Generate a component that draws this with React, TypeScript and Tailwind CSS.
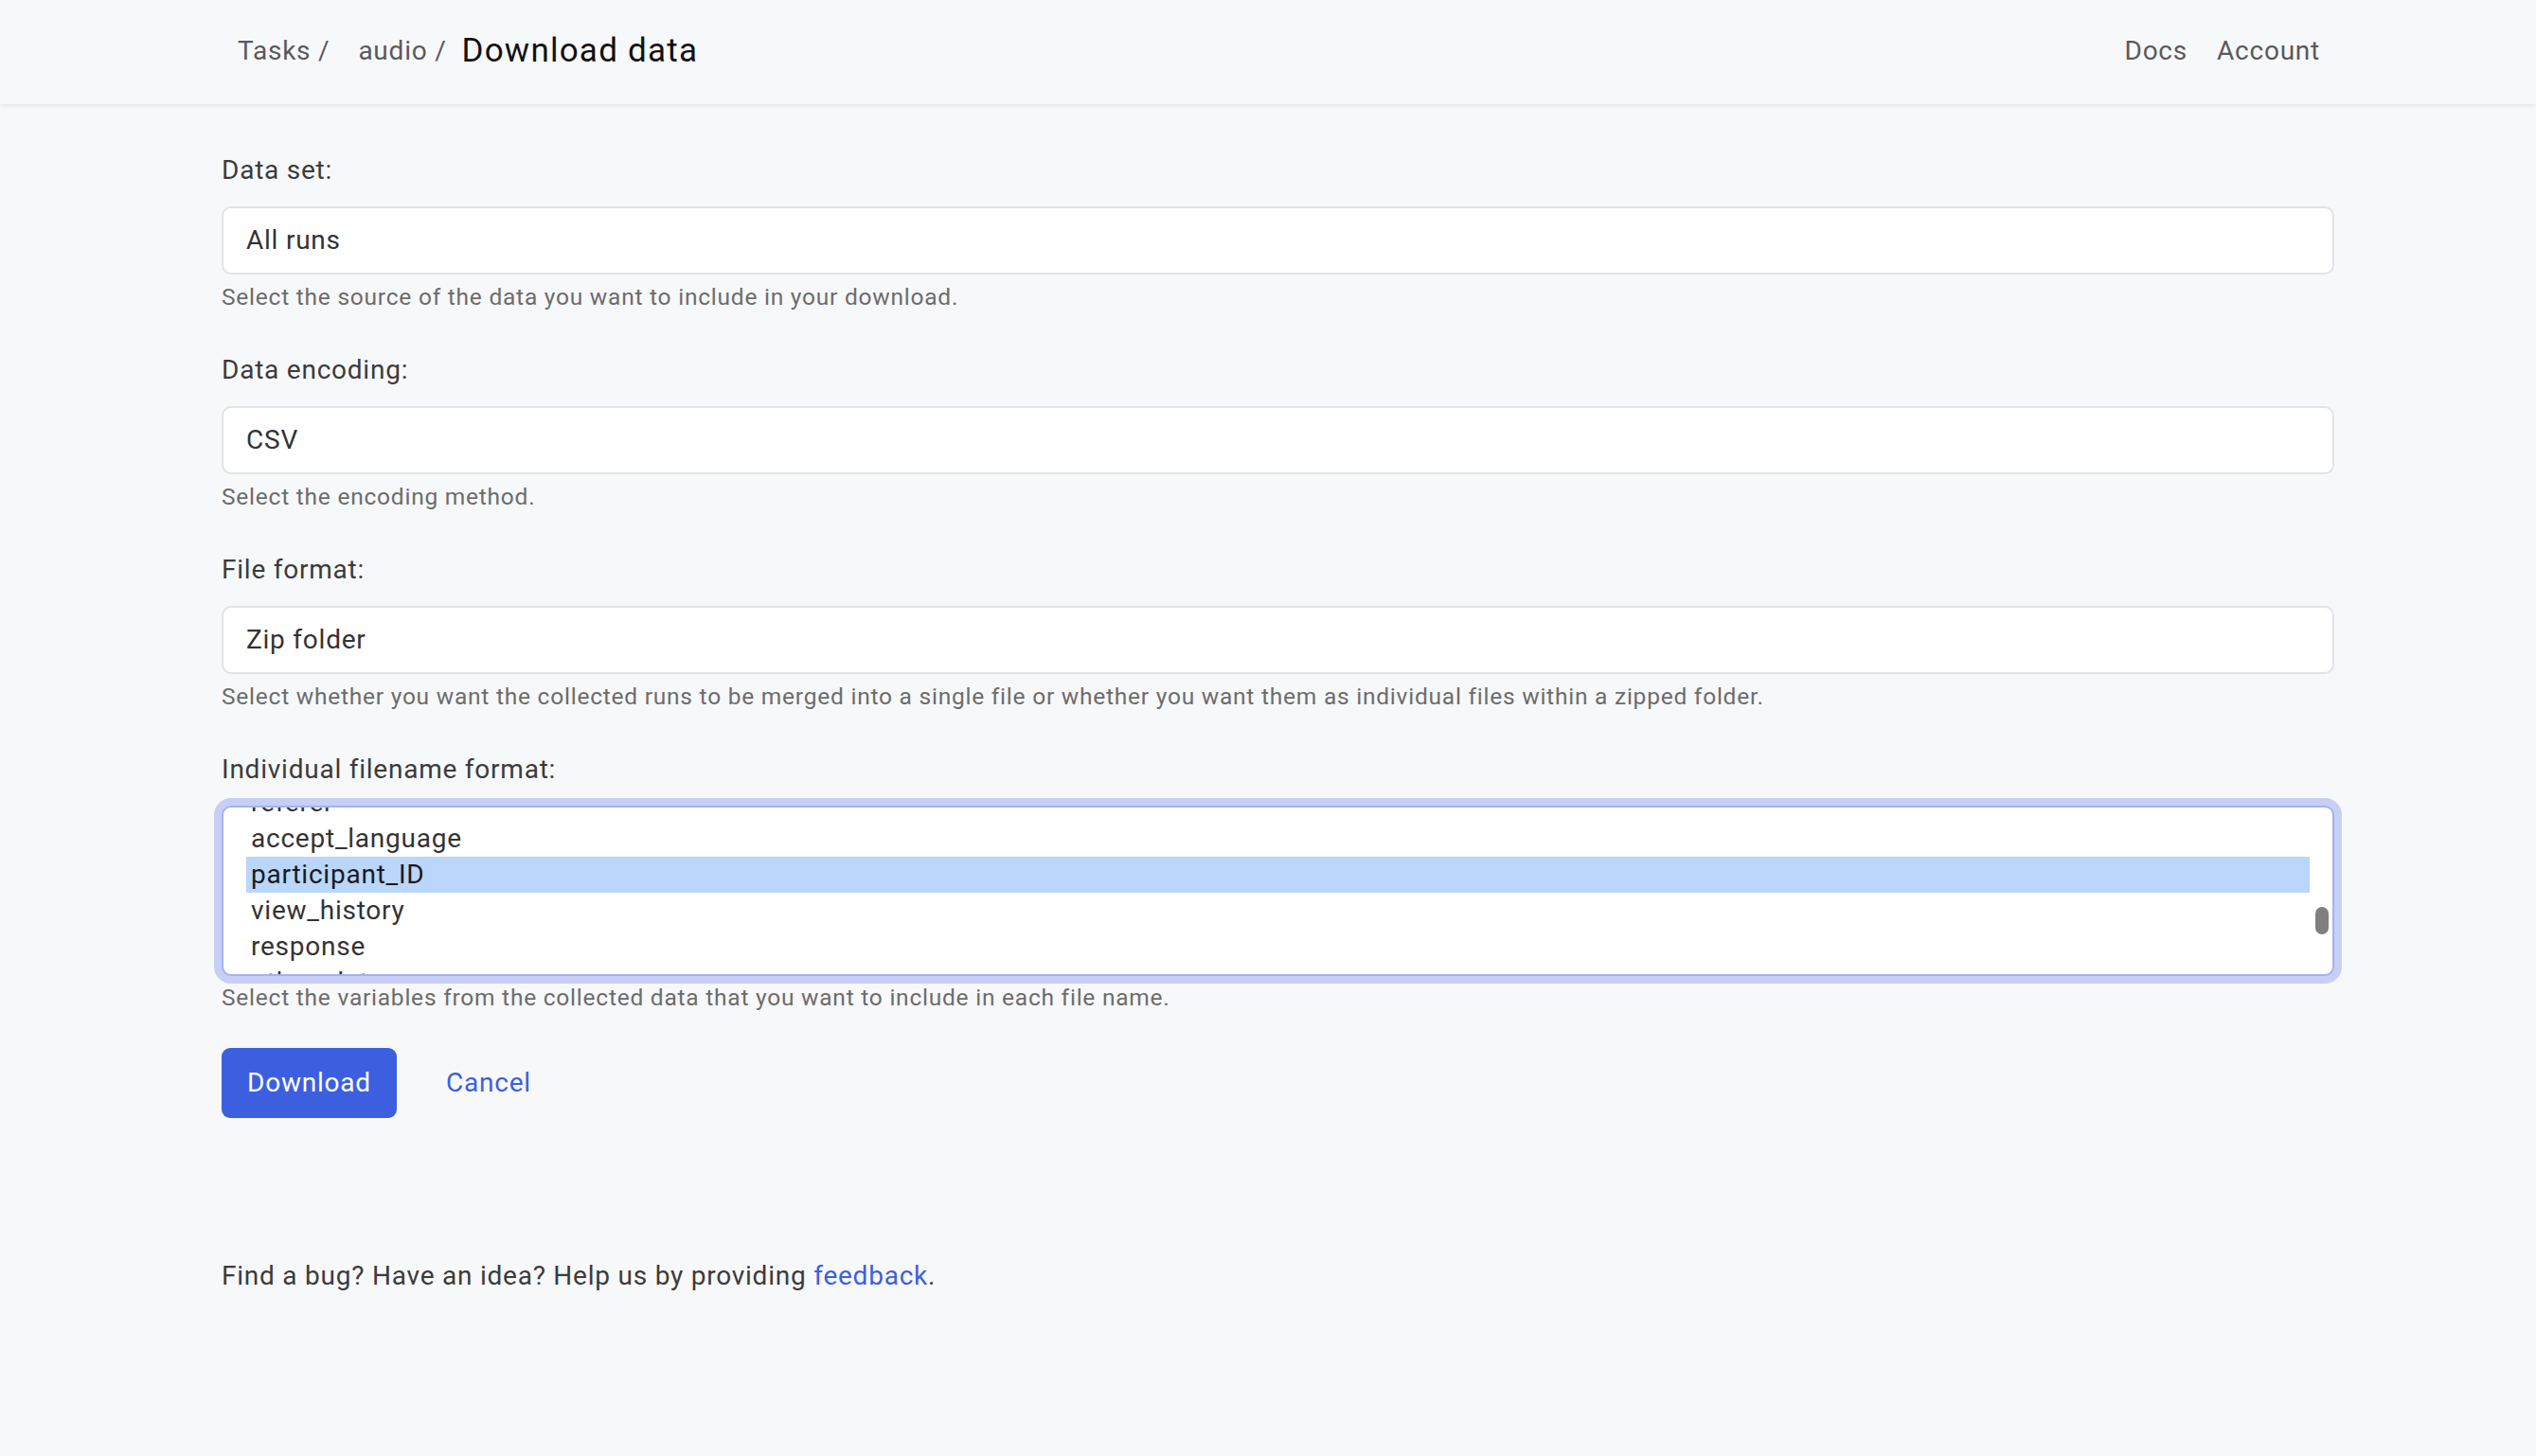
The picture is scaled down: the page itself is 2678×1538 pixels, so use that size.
import React from 'react'

const font = { fontFamily: 'Roboto, "Noto Sans", sans-serif' }

function Field({ label, value, help }: { label: string; value: string; help: string }) {
  return (
    <div className="mb-[36px]">
      <label className="block text-[28px] leading-[42px] text-[#3b3b3b] pt-[2px] mb-[17px]">{label}</label>
      <div className="h-[72px] w-full rounded-[10px] border-2 border-[#e1e3e8] bg-white px-[24px] flex items-center text-[28px] text-[#333]">
        {value}
      </div>
      <p className="mt-[6px] text-[24.5px] leading-[36px] text-[#6c6c6c]">{help}</p>
    </div>
  )
}

const variables = ['referer', 'accept_language', 'participant_ID', 'view_history', 'response', 'other_data']

export default function App() {
  return (
    <div className="min-h-[1538px] bg-[#f7f8fa] tracking-[0.048em]" style={font}>
      {/* Top nav */}
      <header className="h-[110px] bg-[#f7f8fa] shadow-[0_2px_4px_rgba(0,0,0,0.08)] flex items-center justify-between pl-[251px] pr-[228px]">
        <nav className="-mt-[2px] flex items-center text-[28px] text-[#5a5a5a]">
          <span>Tasks /</span>
          <span className="ml-[30px]">audio /</span>
          <span className="ml-[16px] text-[35px] text-[#111] tracking-[0.035em]">Download data</span>
        </nav>
        <div className="-mt-[2px] flex items-center gap-[31px] text-[28px] text-[#5a5a5a]">
          <span>Docs</span>
          <span>Account</span>
        </div>
      </header>

      <main className="pl-[234px] pr-[213px] pt-[47px]">
        <Field label="Data set:" value="All runs" help="Select the source of the data you want to include in your download." />
        <Field label="Data encoding:" value="CSV" help="Select the encoding method." />
        <Field
          label="File format:"
          value="Zip folder"
          help="Select whether you want the collected runs to be merged into a single file or whether you want them as individual files within a zipped folder."
        />

        <div>
          <label className="block text-[28px] leading-[42px] text-[#3b3b3b] pt-[2px] mb-[17px]">Individual filename format:</label>
          <div className="relative h-[180px] w-full rounded-[10px] border-2 border-[#a3b2f1] bg-white ring-[8px] ring-[#c8cff4] overflow-hidden">
            <ul className="-mt-[24px] pl-[24px] pr-[24px] text-[28px] text-[#333]">
              {variables.map((v) => (
                <li
                  key={v}
                  className={
                    v === 'participant_ID'
                      ? 'h-[38px] leading-[38px] bg-[#bad6fb] text-[#1a1a1a] px-[5px]'
                      : 'h-[38px] leading-[38px] px-[5px]'
                  }
                >
                  {v}
                </li>
              ))}
            </ul>
            <div className="absolute right-[4px] top-[105px] h-[29px] w-[14px] rounded-full bg-[#7f7f7f]" />
          </div>
          <p className="mt-[5px] text-[24.5px] leading-[36px] text-[#6c6c6c]">
            Select the variables from the collected data that you want to include in each file name.
          </p>
        </div>

        <div className="mt-[35px] flex items-center">
          <button className="h-[74px] w-[185px] rounded-[9px] bg-[#3c5fe0] text-white text-[28px]">Download</button>
          <a className="ml-[52px] text-[28px] text-[#3c5fe0]">Cancel</a>
        </div>

        <p className="mt-[146px] text-[28px] leading-[42px] text-[#3b3b3b]">
          Find a bug? Have an idea? Help us by providing <a className="text-[#3c5fe0]">feedback</a>.
        </p>
      </main>
    </div>
  )
}
